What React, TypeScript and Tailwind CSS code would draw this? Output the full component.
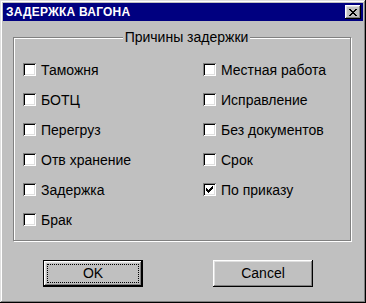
import { useState } from 'react'

const font = "font-['Liberation_Sans',Arial,sans-serif]"

const CHECK_PIXELS = [
  '......X',
  '.....XX',
  'X...XXX',
  'XX.XXX.',
  'XXXXX..',
  '.XXX...',
  '..X....',
]

const CLOSE_PIXELS = [
  'XX....XX',
  '.XX..XX.',
  '..XXXX..',
  '...XX...',
  '..XXXX..',
  '.XX..XX.',
  'XX....XX',
]

const PixelGlyph = ({ rows }: { rows: string[] }) => (
  <svg height={rows.length} shapeRendering="crispEdges" width={rows[0].length}>
    {rows.flatMap((row, y) =>
      row.split('').map((c, x) => (c === 'X' ? <rect fill="#000" height={1} key={`${x}-${y}`} width={1} x={x} y={y} /> : null)),
    )}
  </svg>
)

const leftItems = ['Таможня', 'БОТЦ', 'Перегруз', 'Отв хранение', 'Задержка', 'Брак']
const rightItems = ['Местная работа', 'Исправление', 'Без документов', 'Срок', 'По приказу']

const Checkbox = ({ label, checked, onToggle }: { label: string; checked: boolean; onToggle: () => void }) => (
  <label className="flex h-[13px] cursor-default items-center gap-[5px] select-none" onClick={onToggle}>
    <span className="flex size-[13px] shrink-0 items-center justify-center bg-white shadow-[inset_1px_1px_#808080,inset_-1px_-1px_#fff,inset_2px_2px_#000,inset_-2px_-2px_#dfdfdf]">
      {checked && <PixelGlyph rows={CHECK_PIXELS} />}
    </span>
    <span className="text-[14px] leading-[16px] text-black">{label}</span>
  </label>
)

const WinButton = ({ children, isDefault }: { children: string; isDefault?: boolean }) => (
  <button
    className={
      isDefault
        ? 'flex h-[27px] w-[100px] items-center justify-center border border-black bg-[#c0c0c0] p-[3px] text-[14px] text-black shadow-[inset_-1px_-1px_#000,inset_1px_1px_#fff,inset_-2px_-2px_#808080,inset_2px_2px_#dfdfdf]'
        : 'flex h-[27px] w-[100px] items-center justify-center bg-[#c0c0c0] text-[14px] text-black shadow-[inset_-1px_-1px_#000,inset_1px_1px_#fff,inset_-2px_-2px_#808080,inset_2px_2px_#dfdfdf]'
    }
    type="button"
  >
    {isDefault ? (
      <span className="flex size-full items-center justify-center border border-dotted border-black">{children}</span>
    ) : (
      children
    )}
  </button>
)

export default function App() {
  const [checked, setChecked] = useState<Record<string, boolean>>({ 'По приказу': true })
  const toggle = (k: string) => setChecked((s) => ({ ...s, [k]: !s[k] }))

  return (
    <div
      className={`${font} flex h-[303px] w-[366px] flex-col bg-[#c0c0c0] p-[3px] shadow-[inset_-1px_-1px_#000,inset_1px_1px_#dfdfdf,inset_-2px_-2px_#808080,inset_2px_2px_#fff]`}
    >
      <div className="flex h-[18px] shrink-0 items-center justify-between bg-[#000080] pr-[2px] pl-[3px]">
        <span className="text-[12px] leading-none font-bold tracking-[0.2px] text-white">ЗАДЕРЖКА ВАГОНА</span>
        <button
          className="flex h-[14px] w-[16px] items-center justify-center bg-[#c0c0c0] shadow-[inset_-1px_-1px_#000,inset_1px_1px_#fff,inset_-2px_-2px_#808080,inset_2px_2px_#dfdfdf]"
          type="button"
        >
          <PixelGlyph rows={CLOSE_PIXELS} />
        </button>
      </div>

      <fieldset className="mt-[8px] ml-[10px] h-[212px] w-[338px] border border-[#808080] pt-[18px] pl-[9px] shadow-[inset_1px_1px_#fff,1px_1px_#fff]">
        <legend className="mx-auto bg-[#c0c0c0] px-[2px] text-[14px] leading-[16px] text-black">Причины задержки</legend>
        <div className="grid grid-cols-[180px_1fr]">
          <div className="flex flex-col gap-[17px]">
            {leftItems.map((l) => (
              <Checkbox checked={!!checked[l]} key={l} label={l} onToggle={() => toggle(l)} />
            ))}
          </div>
          <div className="flex flex-col gap-[17px]">
            {rightItems.map((l) => (
              <Checkbox checked={!!checked[l]} key={l} label={l} onToggle={() => toggle(l)} />
            ))}
          </div>
        </div>
      </fieldset>

      <div className="mt-[19px] flex gap-[70px] pl-[40px]">
        <WinButton isDefault>OK</WinButton>
        <WinButton>Cancel</WinButton>
      </div>
    </div>
  )
}
